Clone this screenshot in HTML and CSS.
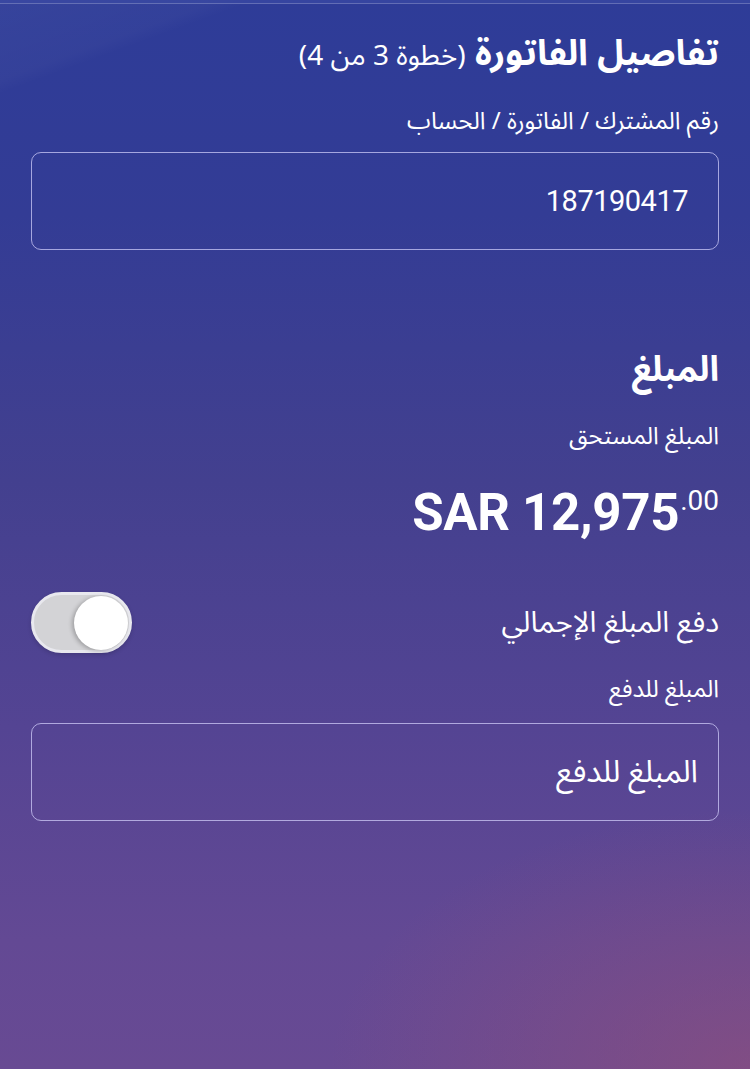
FILE: index.html
```html
<!DOCTYPE html>
<html lang="ar" dir="rtl">
<head>
<meta charset="utf-8">
<link rel="stylesheet" href="styles.css">
</head>
<body>
<div class="screen">
  <div class="topline"></div>
  <main class="content">
    <h1 class="title">تفاصيل الفاتورة <span class="step">(خطوة 3 من 4)</span></h1>
    <div class="label first">رقم المشترك / الفاتورة / الحساب</div>
    <div class="field field-first"><span class="num">187190417</span></div>

    <h2 class="section">المبلغ</h2>
    <div class="label due">المبلغ المستحق</div>
    <div class="amount" dir="ltr"><span class="amt-main">SAR 12,975</span><span class="amt-dec">.00</span></div>

    <div class="toggle-row">
      <span class="toggle-label">دفع المبلغ الإجمالي</span>
      <span class="switch"><span class="knob"></span></span>
    </div>
    <div class="label pay">المبلغ للدفع</div>
    <div class="field field-pay"><span class="placeholder">المبلغ للدفع</span></div>
  </main>
</div>
</body>
</html>
```

FILE: styles.css
```css
* { box-sizing: border-box; }
html, body { margin: 0; padding: 0; }
body {
  width: 750px;
  height: 1069px;
  overflow: hidden;
  font-family: "Noto Sans Arabic", "DejaVu Sans", "Noto Sans", sans-serif;
  color: #ffffff;
}
.screen {
  position: relative;
  width: 750px;
  height: 1069px;
  background:
    radial-gradient(ellipse 420px 260px at 100% 100%, rgba(150, 80, 120, 0.55), rgba(150, 80, 120, 0) 100%),
    linear-gradient(160deg, rgba(255,255,255,0.04) 0%, rgba(255,255,255,0.025) 6%, rgba(255,255,255,0) 7%),
    linear-gradient(to bottom, #2e3c98 0%, #333c95 20%, #43408f 45%, #544493 68%, #634994 88%, #684a93 100%);
}
.topline {
  height: 4px;
  border-bottom: 1px solid rgba(255,255,255,0.22);
  background: rgba(60, 75, 165, 0.6);
}
.content {
  padding: 26px 31px 0 31px;
}
.title {
  margin: 0;
  font-size: 36px;
  font-weight: 700;
  line-height: 48px;
  white-space: nowrap;
}
.step {
  font-size: 28px;
  font-weight: 400;
}
.section {
  margin: 98px 0 0 0;
  font-size: 35px;
  font-weight: 700;
  line-height: 44px;
}
.label {
  font-size: 24px;
  line-height: 32px;
}
.label.first { margin-top: 25px; }
.label.due { margin-top: 29px; }
.label.pay { margin-top: 21px; }
.field {
  height: 98px;
  border: 1.5px solid rgba(215, 212, 255, 0.7);
  border-radius: 10px;
  display: flex;
  align-items: center;
  padding: 0 30px;
}
.field-first { margin-top: 14px; }
.field-pay { margin-top: 17px; }
.num {
  font-family: "Roboto", "Liberation Sans", sans-serif;
  font-size: 29px;
  font-weight: 400;
  letter-spacing: -0.5px;
}
.placeholder {
  font-size: 31px;
  margin-right: -10px;
}
.amount {
  margin-top: 16px;
  text-align: right;
  font-family: "Roboto", "Liberation Sans", sans-serif;
  font-weight: 700;
  line-height: 64px;
  white-space: nowrap;
}
.amt-main { font-size: 51px; letter-spacing: -0.3px; }
.amt-dec {
  font-size: 28px;
  font-weight: 400;
  vertical-align: 20px;
  margin-left: 1px;
}
.toggle-row {
  margin-top: 34px;
  display: flex;
  justify-content: space-between;
  align-items: center;
  height: 62px;
}
.toggle-label {
  font-size: 29px;
}
.switch {
  position: relative;
  display: block;
  width: 101px;
  height: 61px;
  border-radius: 31px;
  background: #d3d3d6;
  border: 3px solid #e8e8ee;
  box-shadow: 0 2px 4px rgba(0,0,0,0.15);
}
.knob {
  position: absolute;
  top: 1.5px;
  right: 1.5px;
  width: 54px;
  height: 54px;
  border-radius: 50%;
  background: #ffffff;
  box-shadow: -2px 1px 4px rgba(0,0,0,0.25);
}
```
